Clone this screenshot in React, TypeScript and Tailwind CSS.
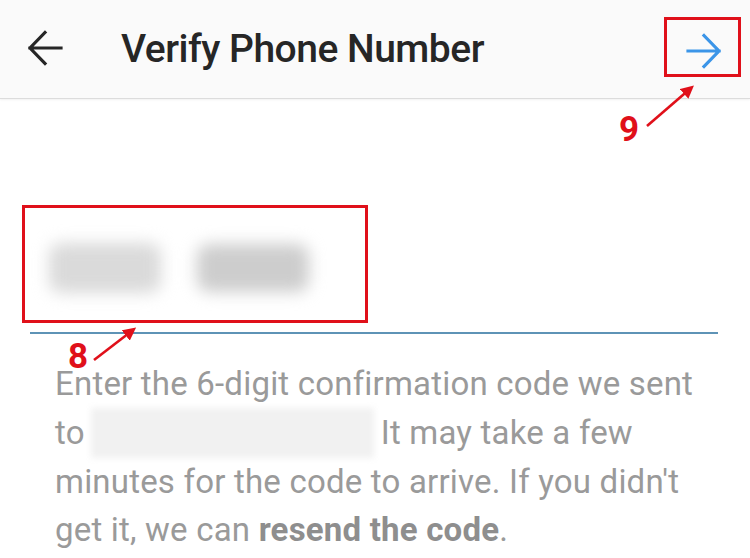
function Callout({ n, className }: { n: string; className: string }) {
  return (
    <span
      className={`absolute font-['Roboto',sans-serif] text-[35px] font-bold leading-none text-[#e0101a] ${className}`}
    >
      {n}
    </span>
  );
}

function Arrow({ dir, className }: { dir: 'left' | 'right'; className: string }) {
  // material-style arrow, drawn in a 36px box
  const d = dir === 'left' ? 'M3 18 H34 M18 2.5 L3 18 L18 33.5' : 'M2 18 H33 M18 2.5 L33 18 L18 33.5';
  return (
    <svg width="36" height="36" viewBox="0 0 36 36" className={className}>
      <path d={d} fill="none" stroke="currentColor" strokeWidth="3.2" strokeLinecap="square" strokeLinejoin="miter" />
    </svg>
  );
}

export default function App() {
  return (
    <div className="relative h-[558px] w-[750px] overflow-hidden bg-white font-['Roboto',sans-serif]">
      {/* header */}
      <div className="flex h-[99px] items-center border-b border-[#dcdcdc] bg-[#fafafa] shadow-[0_1px_2px_rgba(0,0,0,0.06)]">
        <Arrow dir="left" className="ml-[27px] mb-[2px] text-[#262626]" />
        <h1 className="ml-[58px] text-[39px] font-medium tracking-[-0.5px] text-[#262626]">Verify Phone Number</h1>
        <div className="ml-auto mr-[9px] mb-[4px] flex h-[60px] w-[77px] items-center justify-center border-[3px] border-[#e0101a]">
          <Arrow dir="right" className="ml-[3px] mt-[8px] text-[#3b95e8]" />
        </div>
      </div>

      {/* code field */}
      <div className="px-[30px] pt-[106px]">
        <div className="ml-[-8px] flex h-[118px] w-[346px] items-center gap-[36px] border-[3px] border-[#e0101a] pl-[24px] pt-[8px]">
          <div className="h-[50px] w-[112px] rounded-xl bg-[#dadada] blur-[8px]" />
          <div className="h-[48px] w-[112px] rounded-xl bg-[#cdcdcd] blur-[8px]" />
        </div>
        <div className="mt-[9px] h-[2px] w-[688px] bg-[#5e93b6]" />
      </div>

      <p className="w-[720px] pl-[55px] pt-[26px] text-[33px] leading-[48px] tracking-[0.2px] text-[#9a9a9a]">
        Enter the 6-digit confirmation code we sent
        <br />
        to<span className="ml-[6px] mr-[7px] inline-block h-[50px] w-[283px] align-[-14px] bg-[#f1f1f1] blur-[3px]" />It may take a few
        <br />
        minutes for the code to arrive. If you didn't
        <br />
        get it, we can <span className="font-bold text-[#8e8e8e]">resend the code</span>.
      </p>

      <Callout n="9" className="left-[619px] top-[112px]" />
      <Callout n="8" className="left-[68px] top-[339px]" />
      <svg className="pointer-events-none absolute inset-0" width="750" height="558">
        <defs>
          <marker id="ah" markerWidth="5" markerHeight="5" refX="3.5" refY="2.5" orient="auto">
            <path d="M0,0 L5,2.5 L0,5 Z" fill="#e0101a" />
          </marker>
        </defs>
        <line x1="647" y1="126" x2="691" y2="88" stroke="#e0101a" strokeWidth="2.6" markerEnd="url(#ah)" />
        <line x1="94" y1="360" x2="133" y2="330" stroke="#e0101a" strokeWidth="2.6" markerEnd="url(#ah)" />
      </svg>
    </div>
  );
}
